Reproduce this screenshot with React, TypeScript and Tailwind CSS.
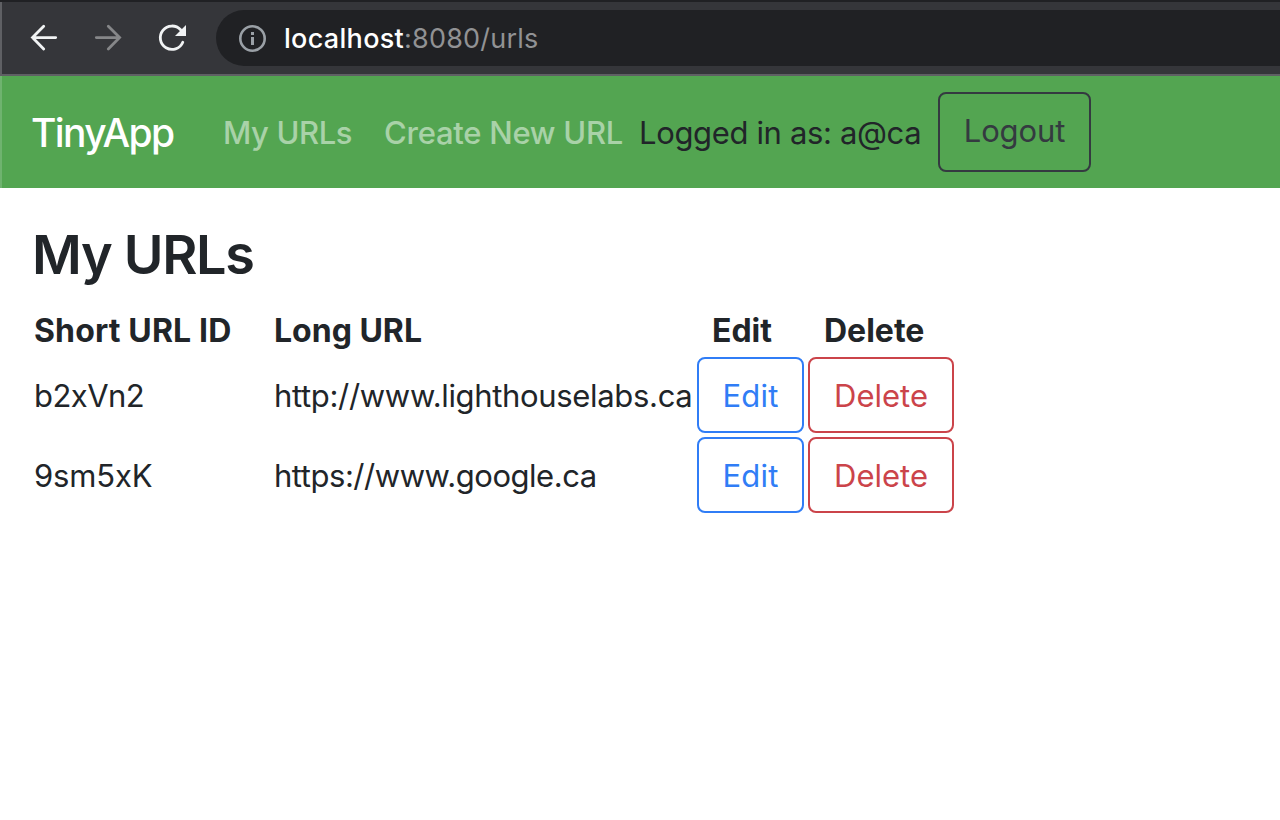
import React from "react";

type UrlRow = { id: string; longUrl: string; urlTracking: string; idTracking: string };

const rows: UrlRow[] = [
  { id: "b2xVn2", longUrl: "http://www.lighthouselabs.ca", urlTracking: "tracking-[-0.33px]", idTracking: "tracking-[-0.55px]" },
  { id: "9sm5xK", longUrl: "https://www.google.ca", urlTracking: "tracking-[-0.46px]", idTracking: "tracking-[-0.15px]" },
];

function BrowserBar() {
  return (
    <header className="flex h-[76px] items-center border-t-2 border-b-2 border-t-[#202124] border-b-[#5f6064] bg-[#35363a]">
      <div className="h-[72px] w-0.5 shrink-0 bg-[#5f6064]" />
      <svg className="h-[72px] w-[214px] shrink-0" viewBox="2 2 214 72" fill="none">
        <path d="M55.7 37.6H32.5M43.7 26.3L32.5 37.6L43.7 48.9" stroke="#f1f3f4" strokeWidth="2.8" strokeLinecap="round" />
        <path d="M96.3 37.6H119.5M108.3 26.3L119.6 37.6L108.3 48.9" stroke="#868789" strokeWidth="2.8" strokeLinecap="round" />
        <path d="M182.8 42.2A11.7 11.7 0 1 1 180.6 29.8" stroke="#f1f3f4" strokeWidth="2.8" strokeLinecap="round" />
        <path d="M186 25V36H175Z" fill="#f1f3f4" />
      </svg>
      <div className="flex h-14 flex-1 items-center rounded-l-full bg-[#202124] pl-[22px]">
        <svg className="h-7 w-7 shrink-0" viewBox="0 0 28 28" fill="none">
          <circle cx="14.5" cy="14.5" r="12.2" stroke="#9aa0a6" strokeWidth="2.6" />
          <path d="M13 8h3v3h-3zM13 13h3v8h-3z" fill="#9aa0a6" />
        </svg>
        <div className="ml-[18px] pt-0.5 text-[27px] leading-9 whitespace-nowrap text-[#919294]">
          <span className="font-[450] tracking-[0.3px] text-white">localhost</span>
          <span className="tracking-[0.2px]">:8080/urls</span>
        </div>
      </div>
    </header>
  );
}

function Navbar() {
  return (
    <nav className="flex h-28 items-center border-l-2 border-[#6fb36f] bg-[#53a551] text-[31px] leading-[48px] whitespace-nowrap">
      <a className="w-[191px] shrink-0 pt-0.5 pl-[29px] text-[39px] font-[450] tracking-[-1.6px] text-white">TinyApp</a>
      <a className="w-[161px] shrink-0 pt-0.5 pl-[30px] font-[450] tracking-[-0.4px] text-white/50">My URLs</a>
      <a className="w-[255px] shrink-0 pt-0.5 pl-[30px] font-[450] tracking-[-0.25px] text-white/50">Create New URL</a>
      <span className="w-[329px] shrink-0 pt-0.5 pl-[30px] tracking-[-0.35px] text-[#212529]">Logged in as: a@ca</span>
      <button className="flex h-20 w-[153px] shrink-0 justify-center rounded-lg border-2 border-[#343a40] pt-[13px] leading-[48px] tracking-[-0.1px] text-[#343a40]">
        Logout
      </button>
    </nav>
  );
}

function UrlTable() {
  return (
    <main className="pt-[33px] pl-8 text-[31px] leading-[48px] text-[#212529]">
      <h3 className="text-[54px] leading-[67px] font-[570] tracking-[-1.3px]">My URLs</h3>
      <div className="mt-[18px] grid w-max grid-cols-[240px_425px_111px_146px] whitespace-nowrap">
        <div className="h-[51px] pt-px pl-0.5 text-[32px] font-bold tracking-[0.15px]">Short URL ID</div>
        <div className="pt-px pl-0.5 text-[32px] font-bold">Long URL</div>
        <div className="pt-px pl-[15px] text-[32px] font-bold">Edit</div>
        <div className="pt-px pl-4 text-[32px] font-bold">Delete</div>
        {rows.map((row) => (
          <React.Fragment key={row.id}>
            <div className={"flex h-20 items-start pt-[15px] pl-0.5 " + row.idTracking}>{row.id}</div>
            <div className={"flex items-start pt-[15px] pl-0.5 " + row.urlTracking}>{row.longUrl}</div>
            <button className="flex h-[76px] w-[107px] items-center justify-center rounded-lg border-2 border-[#307df6] pt-px tracking-[0.2px] text-[#307df6]">Edit</button>
            <button className="flex h-[76px] w-[146px] items-center justify-center rounded-lg border-2 border-[#cb444a] pt-px text-[#cb444a]">Delete</button>
          </React.Fragment>
        ))}
      </div>
    </main>
  );
}

export default function App() {
  return (
    <div className="h-[820px] w-[1280px] overflow-hidden bg-white font-['Inter','Liberation_Sans',sans-serif] [font-feature-settings:'calt'_0]">
      <BrowserBar />
      <Navbar />
      <UrlTable />
    </div>
  );
}
